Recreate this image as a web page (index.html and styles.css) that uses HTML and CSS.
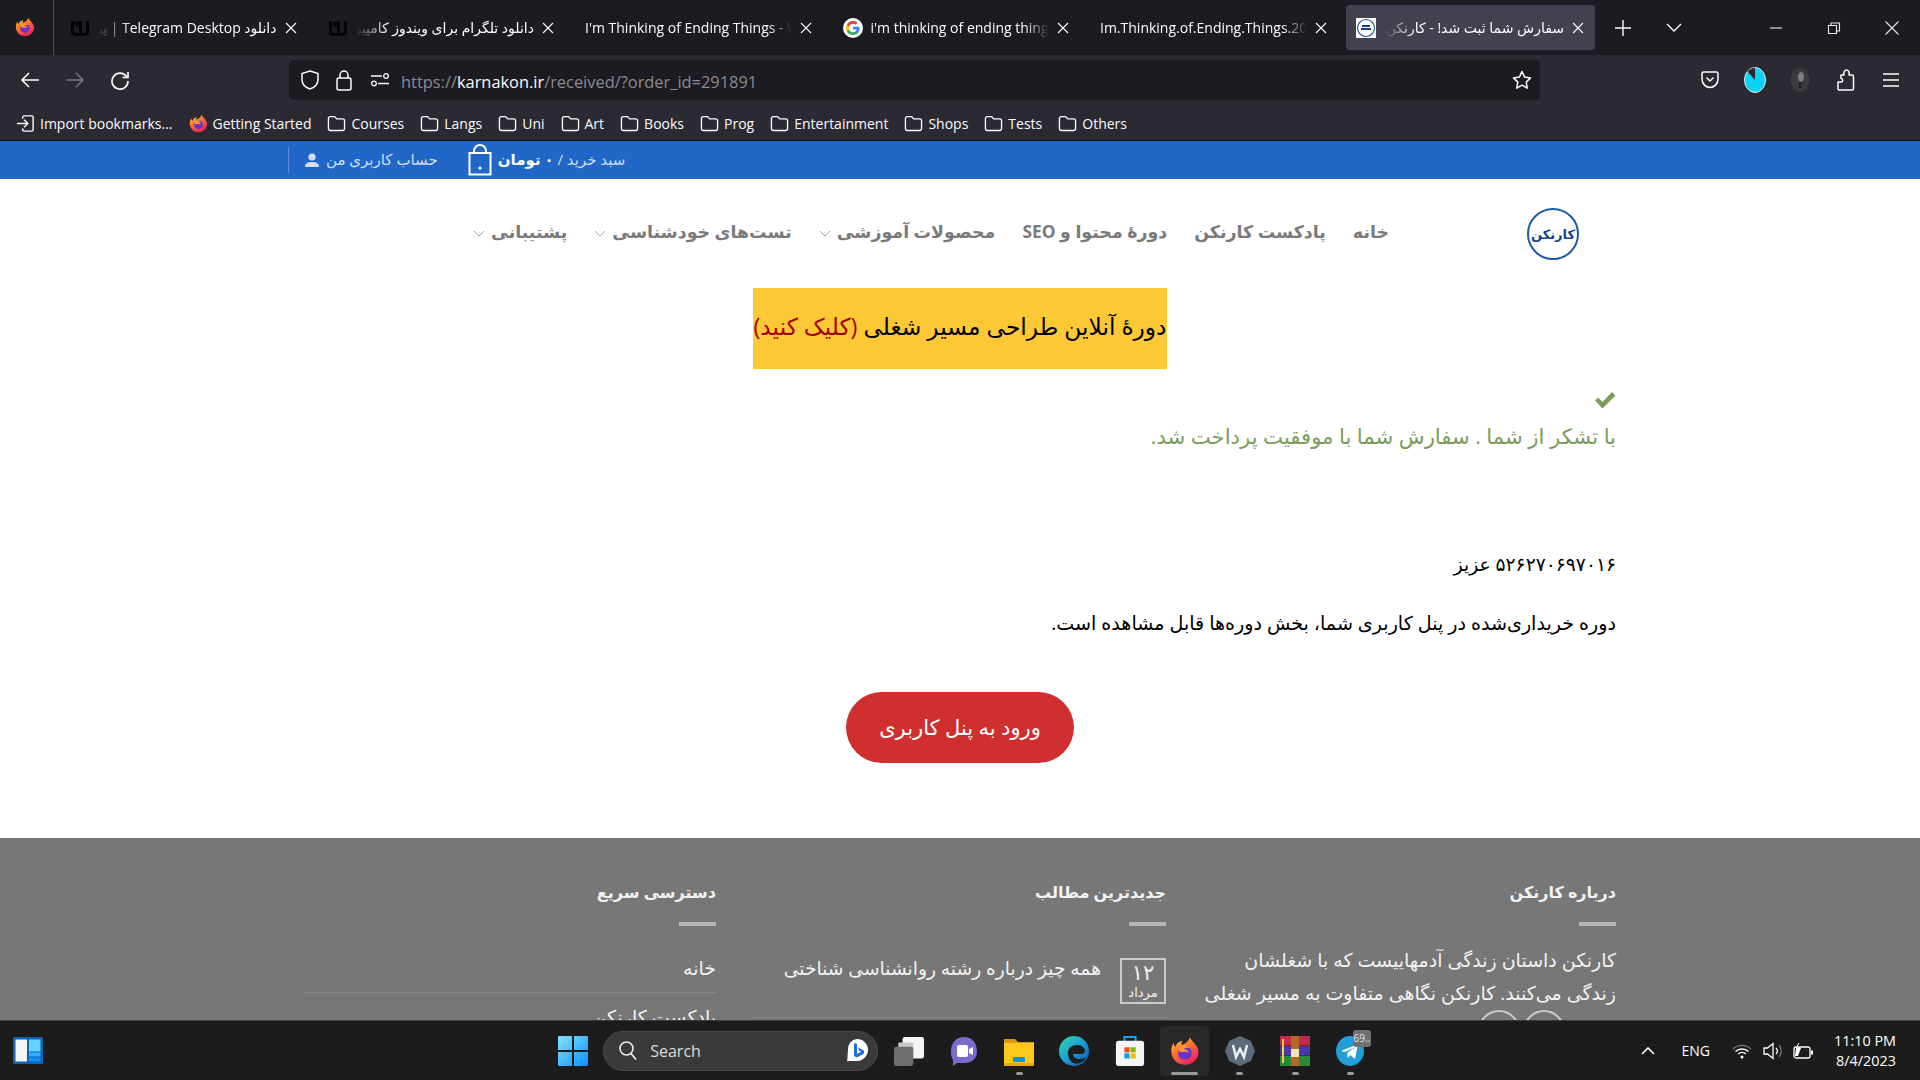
FILE: index.html
```html
<!DOCTYPE html>
<html lang="fa">
<head>
<meta charset="utf-8">
<title>سفارش شما ثبت شد! - کارنکن</title>
<link rel="stylesheet" href="styles.css">
</head>
<body>
<svg class="defs" aria-hidden="true">
  <defs>
    <linearGradient id="ffg" x1="0" y1="0" x2="0.6" y2="1"><stop offset="0" stop-color="#ffd43a"/><stop offset=".45" stop-color="#ff7a2b"/><stop offset="1" stop-color="#f0225c"/></linearGradient>
    <linearGradient id="edgeg" x1="0" y1="0" x2="1" y2="1"><stop offset="0" stop-color="#36d6a0"/><stop offset=".5" stop-color="#1aa0d8"/><stop offset="1" stop-color="#0c4fa8"/></linearGradient>
    <linearGradient id="startg" x1="0" y1="0" x2="1" y2="1"><stop offset="0" stop-color="#7fe3ff"/><stop offset="1" stop-color="#0f8fff"/></linearGradient>
    <symbol id="firefox" viewBox="0 0 24 24">
      <path d="M16 1c1 3 5 5 6.500 9.500C24 16 20 23 12 23 5.500 23 1 18 1 12c0-3 1-5 2-6.500 0 1.500.5 2.500 1.500 3C5 6 7.500 4 10 4c-1 1.500-1 2.500-.5 3 2-.5 5-2 6.500-6z" fill="url(#ffg)"/>
      <circle cx="12" cy="13.500" r="5.500" fill="#6a32c9"/>
      <path d="M7 10c2-3 7-3 9 0-2-1-4-.5-5 .5 2 0 4 1 3.500 3-1-1-3-1-5-.5C8 13 7 12 7 10z" fill="#ff9a2e"/>
    </symbol>
    <symbol id="folder" viewBox="0 0 20 20"><path d="M1.500 5c0-1.300.9-2.200 2.200-2.200h3.600c.8 0 1.300.3 1.800 1l1 1.300h6.200c1.300 0 2.200.9 2.200 2.200v7.900c0 1.300-.9 2.200-2.200 2.200H3.700c-1.300 0-2.200-.9-2.200-2.200z" fill="none" stroke="#fbfbfe" stroke-width="1.400"/></symbol>
    <symbol id="close" viewBox="0 0 12 12"><path d="M1 1l10 10M11 1L1 11" stroke="#fbfbfe" stroke-width="1.100" fill="none"/></symbol>
    <symbol id="blob" viewBox="0 0 20 20"><path d="M1 3h3v9c0 2 1 3 3 3h2V3h3v12h2c1.500 0 2-1 2-2V3h3v11c0 3-2 4-5 4H6c-3 0-5-1-5-4z" fill="#050505"/><circle cx="7" cy="6" r="2.500" fill="#050505"/></symbol>
  </defs>
</svg>

<div class="screen">
  <header class="browser">
    <div class="tabbar">
      <div class="ff-slot"><svg class="i20"><use href="#firefox"/></svg></div>
      <div class="tabs">
        <div class="tab">
          <svg class="fav"><use href="#blob"/></svg>
          <span class="title rtl">دانلود Telegram Desktop | پیام‌رسان تلگرام</span>
          <svg class="x"><use href="#close"/></svg>
        </div>
        <div class="tab">
          <svg class="fav"><use href="#blob"/></svg>
          <span class="title rtl">دانلود تلگرام برای ویندوز کامپیوتر و لپ‌تاپ</span>
          <svg class="x"><use href="#close"/></svg>
        </div>
        <div class="tab">
          <span class="title ltr">I'm Thinking of Ending Things - Wikipedia</span>
          <svg class="x"><use href="#close"/></svg>
        </div>
        <div class="tab">
          <svg class="fav" viewBox="0 0 20 20">
            <circle cx="10" cy="10" r="10" fill="#fff"/>
            <path d="M16.500 10.200c0-.5 0-1-.1-1.400H10v2.700h3.700c-.2.900-.7 1.600-1.400 2.100v1.700h2.200c1.300-1.200 2-3 2-5.100z" fill="#4285f4"/>
            <path d="M10 17c1.900 0 3.400-.6 4.500-1.700l-2.200-1.700c-.6.400-1.400.7-2.300.7-1.800 0-3.300-1.200-3.900-2.900H3.800v1.800C4.900 15.400 7.300 17 10 17z" fill="#34a853"/>
            <path d="M6.100 11.400c-.3-.9-.3-1.900 0-2.800V6.800H3.800c-1 1.900-1 4.500 0 6.400z" fill="#fbbc05"/>
            <path d="M10 5.700c1 0 1.900.4 2.600 1l2-2C13.400 3.600 11.800 3 10 3 7.300 3 4.900 4.600 3.800 6.800l2.300 1.800C6.700 6.900 8.200 5.700 10 5.700z" fill="#ea4335"/>
          </svg>
          <span class="title ltr">i'm thinking of ending things - Google</span>
          <svg class="x"><use href="#close"/></svg>
        </div>
        <div class="tab">
          <span class="title ltr">Im.Thinking.of.Ending.Things.2020.720p</span>
          <svg class="x"><use href="#close"/></svg>
        </div>
        <div class="tab active">
          <svg class="fav" viewBox="0 0 20 20"><rect width="20" height="20" fill="#fff"/><circle cx="10" cy="10" r="8.500" fill="none" stroke="#1f5aa8" stroke-width="1.200"/><path d="M5 11h10M6 8h8" stroke="#17418a" stroke-width="2"/></svg>
          <span class="title rtl">سفارش شما ثبت شد! - کارنکن</span>
          <svg class="x"><use href="#close"/></svg>
        </div>
      </div>
      <svg class="newtab" viewBox="0 0 16 16"><path d="M8 0v16M0 8h16" stroke="#fbfbfe" stroke-width="1.400"/></svg>
      <svg class="listall" viewBox="0 0 16 10"><path d="M1 1l7 7 7-7" stroke="#fbfbfe" stroke-width="1.400" fill="none"/></svg>
      <div class="wincontrols">
        <svg class="win" viewBox="0 0 14 14"><path d="M1 7h12" stroke="#e8e8ea" stroke-width="1.100"/></svg>
        <svg class="win" viewBox="0 0 14 14"><path d="M1.500 4.500h8v8h-8zM4 4.500V2h8.500v8H9.500" stroke="#e8e8ea" stroke-width="1.100" fill="none"/></svg>
        <svg class="win" viewBox="0 0 14 14"><path d="M.5.5l13 13M13.500.5l-13 13" stroke="#e8e8ea" stroke-width="1.100" fill="none"/></svg>
      </div>
    </div>

    <div class="navbar">
      <div class="navbtns">
        <svg class="nb" viewBox="0 0 20 20"><path d="M19 10H2M9 3l-7 7 7 7" stroke="#fbfbfe" stroke-width="1.600" fill="none"/></svg>
        <svg class="nb" viewBox="0 0 20 20"><path d="M1 10h17M11 3l7 7-7 7" stroke="#77767c" stroke-width="1.600" fill="none"/></svg>
        <svg class="nb" viewBox="0 0 20 20"><path d="M16.500 6.500A8 8 0 1 0 18 11M18 2v5.500h-5.500" stroke="#fbfbfe" stroke-width="1.700" fill="none"/></svg>
      </div>
      <div class="urlbar">
        <svg class="u1" viewBox="0 0 20 20"><path d="M10 1l8 2.500v6c0 4.500-3.500 8-8 9.500-4.500-1.500-8-5-8-9.500v-6z" stroke="#fbfbfe" stroke-width="1.500" fill="none"/></svg>
        <svg class="u2" viewBox="0 0 18 22"><rect x="2" y="9" width="14" height="12" rx="2" stroke="#fbfbfe" stroke-width="1.500" fill="none"/><path d="M5 9V6a4 4 0 0 1 8 0v3" stroke="#fbfbfe" stroke-width="1.500" fill="none"/></svg>
        <svg class="u3" viewBox="0 0 18 14"><circle cx="3" cy="10.500" r="2.300" stroke="#fbfbfe" fill="none" stroke-width="1.300"/><path d="M7 10.500h11M0 3h11" stroke="#fbfbfe" stroke-width="1.400"/><circle cx="15" cy="3" r="2.300" stroke="#fbfbfe" fill="none" stroke-width="1.300"/></svg>
        <span class="url">https://<b>karnakon.ir</b>/received/?order_id=291891</span>
        <svg class="star" viewBox="0 0 20 20"><path d="M10 1.500l2.600 5.600 6 .8-4.400 4.200 1.100 6L10 15.200l-5.300 2.900 1.100-6L1.400 7.900l6-.8z" stroke="#fbfbfe" stroke-width="1.500" fill="none" stroke-linejoin="round"/></svg>
      </div>
      <div class="navtools">
        <svg class="t1" viewBox="0 0 18 20"><path d="M1 3.500C1 2.500 1.800 2 2.800 2h12.400c1 0 1.800.5 1.800 1.500V9c0 5-4 8.500-8 8.500S1 14 1 9z" stroke="#fbfbfe" stroke-width="1.500" fill="none"/><path d="M5.500 7.500L9 11l3.500-3.500" stroke="#fbfbfe" stroke-width="1.500" fill="none"/></svg>
        <svg class="t2" viewBox="0 0 22 26"><ellipse cx="11" cy="13" rx="10.500" ry="12.500" fill="#0cd3f5" stroke="#e8e8ea" stroke-width="1"/><path d="M11 13L3.500 4.500Q7 .8 11 .8z" fill="#2b2a33"/></svg>
        <svg class="t3" viewBox="0 0 20 24"><ellipse cx="10" cy="12" rx="9.500" ry="11.500" fill="#3c3b40"/><ellipse cx="11" cy="9" rx="3" ry="5" fill="#7d7c80"/><path d="M10 14v6" stroke="#1c1c20" stroke-width="2"/></svg>
        <svg class="t4" viewBox="0 0 18 22"><path d="M1 20V13h3.500c1.500 0 1.500-3.500 0-3.500H4V6h3c-1-3 1-5 2.500-5S13 3 12 6h3c1 0 1.500.5 1.500 1.500V20c0 .7-.4 1-1 1H2c-.6 0-1-.3-1-1z" stroke="#fbfbfe" stroke-width="1.500" fill="none" stroke-linejoin="round"/></svg>
        <svg class="t5" viewBox="0 0 16 14"><path d="M0 1h16M0 7h16M0 13h16" stroke="#fbfbfe" stroke-width="1.500"/></svg>
      </div>
    </div>

    <div class="bookmarks">
      <span class="bm"><svg class="bmi" viewBox="0 0 20 20"><path d="M7 5V3.500C7 2.700 7.700 2 8.500 2h8c.8 0 1.500.7 1.500 1.500v13c0 .8-.7 1.500-1.500 1.500h-8c-.8 0-1.500-.7-1.500-1.500V15M1 10h11M8.500 6l4 4-4 4" stroke="#fbfbfe" stroke-width="1.500" fill="none"/></svg>Import bookmarks...</span>
      <span class="bm"><svg class="bmi"><use href="#firefox"/></svg>Getting Started</span>
      <span class="bm"><svg class="bmi"><use href="#folder"/></svg>Courses</span>
      <span class="bm"><svg class="bmi"><use href="#folder"/></svg>Langs</span>
      <span class="bm"><svg class="bmi"><use href="#folder"/></svg>Uni</span>
      <span class="bm"><svg class="bmi"><use href="#folder"/></svg>Art</span>
      <span class="bm"><svg class="bmi"><use href="#folder"/></svg>Books</span>
      <span class="bm"><svg class="bmi"><use href="#folder"/></svg>Prog</span>
      <span class="bm"><svg class="bmi"><use href="#folder"/></svg>Entertainment</span>
      <span class="bm"><svg class="bmi"><use href="#folder"/></svg>Shops</span>
      <span class="bm"><svg class="bmi"><use href="#folder"/></svg>Tests</span>
      <span class="bm"><svg class="bmi"><use href="#folder"/></svg>Others</span>
    </div>
  </header>

  <div class="page">
    <div class="topbar">
      <span class="sep"></span>
      <svg class="usericon" viewBox="0 0 16 14"><circle cx="8" cy="4" r="3.600" fill="#d3def2"/><path d="M1 14c0-4 3-5 7-5s7 1 7 5z" fill="#d3def2"/></svg>
      <span class="toplink">حساب کاربری من</span>
      <svg class="bag" viewBox="0 0 24 32"><path d="M6 9V7a6 6 0 0 1 12 0v2" stroke="#fff" stroke-width="2" fill="none"/><rect x="1.500" y="9" width="21" height="21.500" stroke="#fff" stroke-width="2" fill="none"/><circle cx="12" cy="24" r="1.600" fill="#fff"/></svg>
      <span class="toplink cart">سبد خرید / <b>۰ تومان</b></span>
    </div>

    <nav class="sitehead">
      <div class="logo"><span>کارنکن</span></div>
      <a class="navitem">خانه</a>
      <a class="navitem">پادکست کارنکن</a>
      <a class="navitem">دورۀ محتوا و SEO</a>
      <a class="navitem">محصولات آموزشی<svg class="chev" viewBox="0 0 12 7"><path d="M1 1l5 5 5-5" stroke="#a5a5a5" fill="none"/></svg></a>
      <a class="navitem">تست‌های خودشناسی<svg class="chev" viewBox="0 0 12 7"><path d="M1 1l5 5 5-5" stroke="#a5a5a5" fill="none"/></svg></a>
      <a class="navitem">پشتیبانی<svg class="chev" viewBox="0 0 12 7"><path d="M1 1l5 5 5-5" stroke="#a5a5a5" fill="none"/></svg></a>
    </nav>

    <div class="banner"><span class="bannertext">دورۀ آنلاین طراحی مسیر شغلی <span class="red">(کلیک کنید)</span></span></div>

    <main class="content">
      <svg class="check" viewBox="0 0 22 18"><path d="M1 9.500l3-3 4.500 4.500L18 1l3.500 3.500L8.500 17.500z" fill="#7a9c59"/></svg>
      <p class="thanks">با تشکر از شما . سفارش شما با موفقیت پرداخت شد.</p>
      <p class="dear">۵۲۶۲۷۰۶۹۷۰۱۶ عزیز</p>
      <p class="info">دوره خریداری‌شده در پنل کاربری شما، بخش دوره‌ها قابل مشاهده است.</p>
      <div class="btnwrap"><a class="panelbtn">ورود به پنل کاربری</a></div>
    </main>

    <footer class="sitefoot">
      <div class="footcol">
        <h3>درباره کارنکن</h3>
        <div class="bar"></div>
        <p class="about">کارنکن داستان زندگی آدمهاییست که با شغلشان زندگی می‌کنند. کارنکن نگاهی متفاوت به مسیر شغلی</p>
        <div class="socials"><span class="circle"></span><span class="circle"></span></div>
      </div>
      <div class="footcol">
        <h3>جدیدترین مطالب</h3>
        <div class="bar"></div>
        <div class="post">
          <div class="date"><b>۱۲</b><span>مرداد</span></div>
          <span class="posttitle">همه چیز درباره رشته روانشناسی شناختی</span>
        </div>
      </div>
      <div class="footcol">
        <h3>دسترسی سریع</h3>
        <div class="bar"></div>
        <ul class="quick">
          <li>خانه</li>
          <li>پادکست کارنکن</li>
        </ul>
      </div>
    </footer>
  </div>

  <div class="taskbar">
    <svg class="widget" viewBox="0 0 30 27"><rect width="30" height="27" rx="1" fill="#0e62b8"/><rect x="2.500" y="2.500" width="11.500" height="22" fill="#f4f4f4"/><rect x="16" y="2.500" width="11.500" height="12" fill="#66d2ff"/><rect x="16" y="15.500" width="11.500" height="4" fill="#2ab0ff"/><rect x="16" y="20.500" width="11.500" height="4" fill="#0a92f5"/></svg>
    <div class="tbcenter">
      <div class="slot"><svg class="ticon" viewBox="0 0 30 30"><path d="M0 1.500C0 .6.600 0 1.500 0h12.500v14H0zM16 0h12.500c.9 0 1.500.6 1.500 1.500V14H16zM0 16h14v14H1.500C.6 30 0 29.400 0 28.500zM16 16h14v12.500c0 .9-.6 1.500-1.500 1.500H16z" fill="url(#startg)"/></svg></div>
      <div class="search">
        <svg class="sicon" viewBox="0 0 18 20"><circle cx="7.500" cy="7.500" r="6.500" stroke="#e8e8e8" stroke-width="1.600" fill="none"/><path d="M12 12.500l5 6" stroke="#e8e8e8" stroke-width="1.800"/></svg>
        <span class="stext">Search</span>
        <svg class="bing" viewBox="0 0 24 26"><path d="M12 1a11 11 0 0 1 11 11c0 6-5 11-11 11H2v2l1-13A10 10 0 0 1 12 1z" fill="#fff"/><path d="M9 5l3 1v10l4-2.500-2-1-1-3 6 3v3l-7 4-3-1.500z" fill="#1a6fd8"/></svg>
      </div>
      <div class="slot first"><svg class="ticon" viewBox="0 0 28 28"><rect x="8" y="1" width="20" height="20" rx="2" fill="#f5f5f5"/><rect x="4" y="6" width="14" height="14" rx="1" fill="#c8c8c8"/><rect y="10" width="18" height="18" rx="2" fill="#6e6e6e"/></svg></div>
      <div class="slot"><svg class="ticon" viewBox="0 0 30 30"><path d="M15 1c8 0 13 6 13 14s-5 12-13 12H8l-4 3v-6C2 21 2 18 2 15 2 7 7 1 15 1z" fill="#7a6bd1"/><rect x="8" y="9" width="11" height="12" rx="2" fill="#fff"/><path d="M20 13l4-2v8l-4-2z" fill="#fff"/></svg></div>
      <div class="slot dot"><svg class="ticon" viewBox="0 0 30 30"><path d="M0 3h11l3 3h16v24H0z" fill="#d99a10"/><rect y="7" width="30" height="23" fill="#ffc81e"/><rect x="9" y="21" width="12" height="5" rx="1" fill="#1a8ce0"/><rect y="27" width="30" height="3" fill="#e8a60d"/></svg></div>
      <div class="slot"><svg class="ticon" viewBox="0 0 30 30"><circle cx="15" cy="15" r="15" fill="url(#edgeg)"/><path d="M9 17c0-5 4-8 9-8s8 3 8 6c0 2-2 3-4 3h-8c0 3 3 5 7 5 2 0 4-.5 6-1.500-2 4-6 6-10 6-5 0-8-5-8-11z" fill="#1c1c1c"/></svg></div>
      <div class="slot"><svg class="ticon" viewBox="0 0 30 32"><path d="M9 6V1h12v5" stroke="#18a6e8" stroke-width="2" fill="none"/><rect y="5" width="30" height="27" rx="3" fill="#f5f5f5"/><rect x="9" y="12" width="5.500" height="5.500" fill="#f25022"/><rect x="15.500" y="12" width="5.500" height="5.500" fill="#7fba00"/><rect x="9" y="18.500" width="5.500" height="5.500" fill="#00a4ef"/><rect x="15.500" y="18.500" width="5.500" height="5.500" fill="#ffb900"/></svg></div>
      <div class="slot"><div class="activebg"><svg class="ticon"><use href="#firefox"/></svg></div><span class="activebar"></span></div>
      <div class="slot dot"><svg class="ticon" viewBox="0 0 30 30"><path d="M15 0l11 5 4 10-4 10-11 5-11-5L0 15 4 5z" fill="#5b6b7c"/><path d="M8 9l3 12 4-8 4 8 3-12" stroke="#f2f2f2" stroke-width="2.400" fill="none"/></svg></div>
      <div class="slot dot"><svg class="ticon" viewBox="0 0 30 30"><rect width="30" height="9.500" fill="#c52a4e"/><rect y="10" width="30" height="9.500" fill="#4a3aa8"/><rect y="20" width="30" height="10" fill="#2a8a3a"/><rect x="11" width="8" height="30" fill="#b4692a"/><rect x="11" y="13" width="8" height="8" fill="#f2e3b8"/><rect x="2" y="3" width="2" height="24" fill="#f4cf42"/></svg></div>
      <div class="slot dot">
        <svg class="ticon" viewBox="0 0 28 30"><ellipse cx="14" cy="15" rx="14" ry="15" fill="#229ed9"/><path d="M5 15l17-7-3 15-5-4-2 3-1-5 8-6-10 5z" fill="#fff"/></svg>
        <span class="badge">69..</span>
      </div>
    </div>
    <div class="tray">
      <svg class="trayup" viewBox="0 0 14 8"><path d="M1 7l6-6 6 6" stroke="#fff" stroke-width="1.600" fill="none"/></svg>
      <span class="lang">ENG</span>
      <svg class="wifi" viewBox="0 0 20 16"><path d="M1 6a13 13 0 0 1 18 0" stroke="#777" stroke-width="1.300" fill="none"/><path d="M3.500 8.500a9.500 9.500 0 0 1 13 0M6.300 11a5.500 5.500 0 0 1 7.400 0" stroke="#fff" stroke-width="1.500" fill="none"/><circle cx="10" cy="14" r="1.500" fill="#fff"/></svg>
      <svg class="sound" viewBox="0 0 20 18"><path d="M1 6h3.500L10 1.500v15L4.500 12H1z" stroke="#fff" stroke-width="1.300" fill="none"/><path d="M13 6a4 4 0 0 1 0 6" stroke="#fff" stroke-width="1.300" fill="none"/><path d="M16 3a9 9 0 0 1 0 12" stroke="#777" stroke-width="1.300" fill="none"/></svg>
      <svg class="batt" viewBox="0 0 20 16"><rect x="1" y="4" width="16" height="11" rx="2" stroke="#fff" stroke-width="1.300" fill="none"/><rect x="18" y="7.500" width="2" height="4" fill="#fff"/><path d="M3 5h5l-3 8H2z" fill="#fff"/><path d="M6 0L3 5h4l-2 3" stroke="#fff" fill="none"/></svg>
      <div class="clock"><span>11:10 PM</span><span>8/4/2023</span></div>
    </div>
  </div>
</div>
</body>
</html>
```
FILE: styles.css
```css
* { box-sizing: border-box; }
html, body { margin: 0; padding: 0; height: 100%; overflow: hidden; }
body { font-family: "Open Sans", "Noto Sans", "DejaVu Sans", sans-serif; background: #fff; }
.defs { position: absolute; width: 0; height: 0; }
.screen { width: 1920px; height: 1080px; display: flex; flex-direction: column; overflow: hidden; }

/* browser chrome */
.browser { flex: none; color: #fbfbfe; }
.tabbar { height: 55px; background: #1c1b22; display: flex; align-items: center; }
.ff-slot { width: 54px; height: 55px; border-right: 1px solid #4a4a50; display: flex; justify-content: center; padding: 17px 4px 0 0; flex: none; }
.i20 { width: 20px; height: 20px; }
.tabs { display: flex; width: 1545px; height: 55px; flex: none; }
.tab { width: 249.5px; height: 45px; margin: 5px 4px; padding: 0 11px 0 12px; display: flex; align-items: center; gap: 8px; border-radius: 4px; font-size: 14px; flex: none; }
.tab.active { background: #42414d; padding-left: 10px; }
.fav { width: 20px; height: 20px; flex: none; }
.title { flex: 1; min-width: 0; overflow: hidden; white-space: nowrap; }
.title.ltr { direction: ltr; -webkit-mask-image: linear-gradient(to left, transparent 0, #000 24px); mask-image: linear-gradient(to left, transparent 0, #000 24px); }
.title.rtl { direction: rtl; -webkit-mask-image: linear-gradient(to right, transparent 0, #000 32px); mask-image: linear-gradient(to right, transparent 0, #000 32px); }
.x { width: 12px; height: 12px; flex: none; }
.newtab { width: 16px; height: 16px; margin-left: 16px; flex: none; }
.listall { width: 16px; height: 10px; margin-left: 35px; flex: none; }
.wincontrols { margin-left: auto; display: flex; gap: 44px; padding-right: 21px; }
.win { width: 14px; height: 14px; }

.navbar { height: 50px; background: #2b2a33; display: flex; align-items: center; padding-left: 20px; }
.navbtns { display: flex; gap: 25px; width: 269px; }
.nb { width: 20px; height: 20px; }
.urlbar { width: 1251px; height: 40px; background: #1c1b22; border-radius: 5px; display: flex; align-items: center; padding: 0 8px 0 11px; }
.u1 { width: 20px; height: 20px; }
.u2 { width: 18px; height: 22px; margin-left: 15px; }
.u3 { width: 18px; height: 14px; margin-left: 18px; }
.url { margin-left: 12px; padding-top: 3px; font-size: 16.4px; color: #8b8a90; flex: 1; }
.url b { color: #fbfbfe; font-weight: 400; }
.star { width: 20px; height: 20px; }
.navtools { display: flex; align-items: center; margin-left: 161px; }
.t1 { width: 18px; height: 20px; }
.t2 { width: 22px; height: 26px; margin-left: 25px; }
.t3 { width: 20px; height: 24px; margin-left: 24px; }
.t4 { width: 18px; height: 22px; margin-left: 27px; }
.t5 { width: 16px; height: 14px; margin-left: 28px; }

.bookmarks { height: 36px; background: #2b2a33; border-bottom: 1px solid #0c0c0e; display: flex; align-items: center; padding: 1px 0 0 16px; gap: 16px; font-size: 14px; }
.bm { display: flex; align-items: center; gap: 5px; white-space: nowrap; }
.bmi { width: 19px; height: 19px; flex: none; }

/* page */
.page { flex: 1; min-height: 0; overflow: hidden; background: #fff; }
.topbar { height: 38px; background: #2067c8; display: flex; align-items: center; padding-left: 288px; color: #d3def2; font-size: 15px; }
.sep { width: 1px; height: 26px; background: #5a8ad4; }
.usericon { width: 16px; height: 14px; margin-left: 15px; }
.toplink { direction: rtl; margin-left: 6px; padding-bottom: 3px; white-space: nowrap; }
.bag { width: 24px; height: 32px; margin-left: 30px; }
.cart b { color: #fff; }

.sitehead { direction: rtl; width: 1312px; height: 109px; margin: 0 auto; display: flex; align-items: center; padding-right: 37px; }
.logo { width: 52px; height: 52px; margin-left: 138px; border-radius: 50%; border: 2px solid #1f5aa8; display: flex; align-items: center; justify-content: center; color: #14418f; font-weight: 700; font-size: 13px; flex: none; }
.navitem { display: flex; align-items: center; gap: 6px; margin-left: 27px; padding-bottom: 5px; font-size: 17.4px; font-weight: 700; color: #7a7a7a; white-space: nowrap; }
.chev { width: 12px; height: 7px; flex: none; margin-top: 5px; }

.banner { direction: rtl; width: 414px; height: 81px; margin: 0 auto; background: #fdc835; color: #000; font-size: 23.3px; display: flex; align-items: center; justify-content: center; white-space: nowrap; overflow: hidden; }
.bannertext { padding-bottom: 6px; }
.red { color: #a40000; }

.content { direction: rtl; width: 1312px; margin: 0 auto; padding-top: 22px; height: 469px; }
.check { display: block; width: 22px; height: 18px; }
.content p { margin: 0; }
.thanks { padding-top: 13px; font-size: 21.2px; line-height: 28px; color: #7a9c59; }
.dear { padding-top: 100px; font-size: 18.7px; line-height: 28px; color: #000; }
.info { padding-top: 31px; font-size: 19.1px; line-height: 28px; color: #000; }
.btnwrap { display: flex; justify-content: center; padding-top: 55px; }
.panelbtn { width: 228px; height: 71px; border-radius: 36px; background: #cf2f2f; color: #fff; font-size: 21px; padding-bottom: 2px; display: flex; align-items: center; justify-content: center; }

.sitefoot { background: #777; height: 300px; padding: 40px 304px 0; direction: rtl; display: grid; grid-template-columns: repeat(3, 412px); gap: 38px; color: #f2f2f2; }
.footcol h3 { margin: 0; font-size: 16px; line-height: 28px; font-weight: 700; }
.bar { width: 37px; height: 4px; background: #b5b5b5; margin-top: 16px; }
.about { margin: 18px 0 0; font-size: 19px; line-height: 33px; }
.socials { display: flex; gap: 3px; padding-right: 51px; }
.circle { width: 42px; height: 42px; border-radius: 50%; border: 2px solid #ccc; flex: none; }
.post { display: flex; align-items: flex-start; gap: 19px; margin-top: 32px; padding-bottom: 13px; border-bottom: 1px solid #888; }
.date { width: 46px; height: 46px; border: 2px solid #ccc; display: flex; flex-direction: column; align-items: center; flex: none; }
.date b { font-size: 21px; line-height: 24px; font-weight: 400; }
.date span { font-size: 13px; line-height: 16px; }
.posttitle { font-size: 18.7px; line-height: 20px; }
.quick { list-style: none; margin: 30px 0 0; padding: 0; font-size: 19px; }
.quick li { line-height: 24px; height: 37px; border-bottom: 1px solid #888; }
.quick li + li { padding-top: 12px; border: 0; }

/* taskbar */
.taskbar { flex: none; height: 60px; background: #1c1c1c; border-top: 1px solid #3c3c3c; display: flex; align-items: center; padding-left: 13px; color: #fff; }
.widget { width: 30px; height: 27px; flex: none; }
.tbcenter { display: flex; align-items: center; margin-left: 502px; }
.slot { position: relative; width: 55.2px; height: 59px; display: flex; align-items: center; justify-content: center; flex: none; }
.slot.first { margin-left: 3px; }
.ticon { width: 30px; height: 30px; }
.activebg { width: 49px; height: 50px; background: #292929; border-radius: 4px; display: flex; align-items: center; justify-content: center; }
.activebar { position: absolute; left: 14px; bottom: 5px; width: 27px; height: 3px; border-radius: 2px; background: #9a9a9a; }
.slot.dot::after { content: ""; position: absolute; left: 24px; bottom: 5px; width: 7px; height: 3px; border-radius: 2px; background: #9a9a9a; }
.badge { position: absolute; right: 7px; top: 9px; width: 18px; height: 17px; background: #707070; border-radius: 3px; font-size: 10px; text-align: center; line-height: 17px; color: #e5e5e5; }
.search { width: 275px; height: 40px; margin-left: 3px; background: #3a3a3a; border: 1px solid #4a4a4a; border-radius: 20px; display: flex; align-items: center; padding: 0 8px 0 15px; flex: none; }
.sicon { width: 18px; height: 20px; }
.stext { margin-left: 13px; font-size: 16px; color: #dcdcdc; flex: 1; }
.bing { width: 24px; height: 26px; }
.tray { margin-left: auto; display: flex; align-items: center; padding-right: 24px; }
.trayup { width: 14px; height: 8px; }
.lang { margin-left: 26px; font-size: 14px; }
.wifi { width: 20px; height: 16px; margin-left: 22px; }
.sound { width: 20px; height: 18px; margin-left: 11px; }
.batt { width: 20px; height: 16px; margin-left: 10px; }
.clock { margin-left: 21px; display: flex; flex-direction: column; align-items: flex-end; font-size: 14.4px; line-height: 20px; }
```
